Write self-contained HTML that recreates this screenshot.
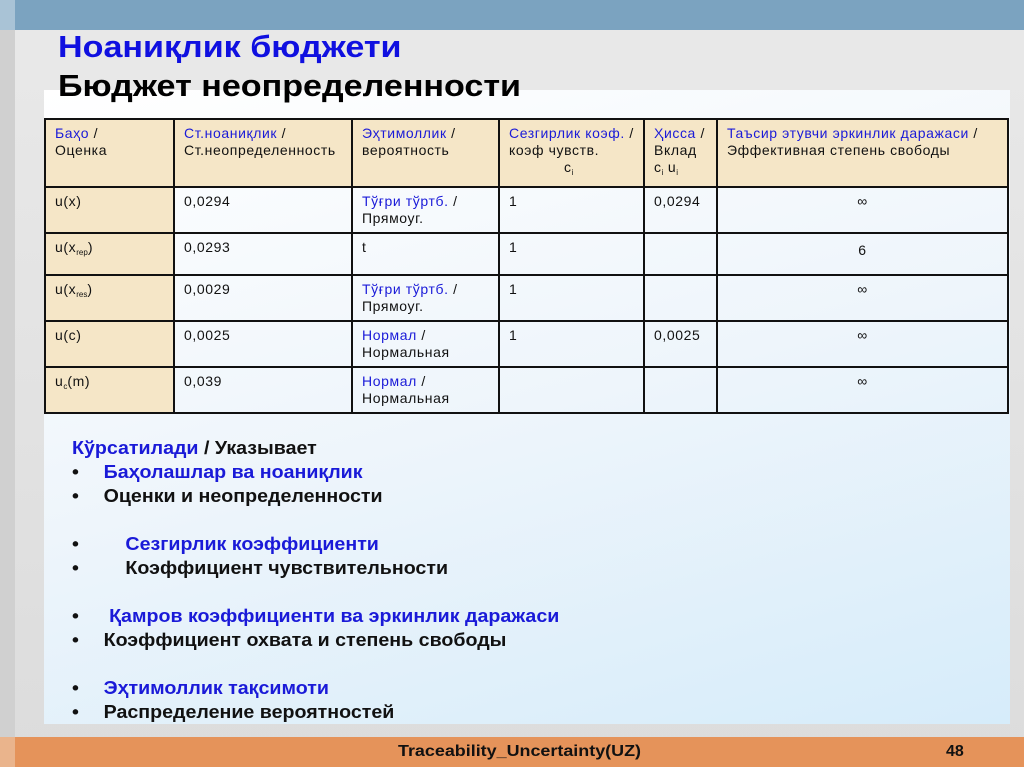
<!DOCTYPE html>
<html><head><meta charset="utf-8"><style>
*{margin:0;padding:0;box-sizing:border-box}
body{width:1024px;height:767px;position:relative;overflow:hidden;font-family:"Liberation Sans",Arial,sans-serif;background:linear-gradient(180deg,#e9e9e9 0%,#dcdcdc 100%)}
.topbar{position:absolute;left:15px;top:0;width:1009px;height:30px;background:#7ba3c0}
.topleft{position:absolute;left:0;top:0;width:15px;height:30px;background:#a9c3d6}
.leftstrip{position:absolute;left:0;top:30px;width:15px;height:707px;background:#d0d0d0}
.h1{position:absolute;left:58px;top:29px;font-size:31px;font-weight:bold;color:#1010e0;transform:scaleX(1.1);transform-origin:left top;white-space:nowrap}
.h2{position:absolute;left:58px;top:68px;font-size:31px;font-weight:bold;color:#000;transform:scaleX(1.1);transform-origin:left top;white-space:nowrap}
.panel{position:absolute;left:44px;top:90px;width:966px;height:634px;background:linear-gradient(165deg,#ffffff 0%,#eef5fb 50%,#d6ecfa 100%)}
table{position:absolute;left:44px;top:118px;border-collapse:collapse;font-size:14px;letter-spacing:.6px;color:#111;table-layout:fixed;width:963px}
td{border:2px solid #111;vertical-align:top;padding:5px 9px;line-height:17px;white-space:nowrap}
tr.hd td{background:#f5e6c7;height:65px}
td.c1{background:#f5e6c7}
.b{color:#1a1ad8}
sub{font-size:8px;vertical-align:-3px;letter-spacing:0}
.list{position:absolute;left:72px;top:436px;font-size:18px;font-weight:bold;line-height:24px;color:#111;transform:scaleX(1.09);transform-origin:left top}
.list div{white-space:nowrap;height:24px}
.list .dot{display:inline-block;width:29px}
.footer{position:absolute;left:15px;top:737px;width:1009px;height:30px;background:#e5935a}
.fl{position:absolute;left:0;top:737px;width:15px;height:30px;background:#eab48c}
.ft{position:absolute;left:398px;top:743px;font-size:16px;font-weight:bold;color:#111;transform:scaleX(1.12);transform-origin:left top;white-space:nowrap}
.pn{position:absolute;left:946px;top:743px;font-size:16px;font-weight:bold;color:#111}
</style></head><body>
<div class="topleft"></div><div class="topbar"></div><div class="leftstrip"></div>
<div class="panel"></div>
<div class="h1">Ноаниқлик бюджети</div>
<div class="h2">Бюджет неопределенности</div>
<table>
<colgroup><col style="width:129px"><col style="width:178px"><col style="width:147px"><col style="width:145px"><col style="width:73px"><col style="width:291px"></colgroup>
<tr class="hd">
<td><span class="b">Баҳо</span> /<br>Оценка</td>
<td><span class="b">Ст.ноаниқлик</span> /<br>Ст.неопределенность</td>
<td><span class="b">Эҳтимоллик</span> /<br>вероятность</td>
<td><span class="b">Сезгирлик коэф.</span> /<br>коэф чувств.<br><span style="padding-left:55px">c<sub>i</sub></span></td>
<td><span class="b">Ҳисса</span> /<br>Вклад<br>c<sub>i</sub> u<sub>i</sub></td>
<td><span class="b">Таъсир этувчи эркинлик даражаси</span> /<br>Эффективная степень свободы</td>
</tr>
<tr style="height:46px"><td class="c1">u(x)</td><td>0,0294</td><td><span class="b">Тўғри тўртб.</span> /<br>Прямоуг.</td><td>1</td><td>0,0294</td><td style="text-align:center">∞</td></tr>
<tr style="height:42px"><td class="c1">u(x<sub>rep</sub>)</td><td>0,0293</td><td>t</td><td>1</td><td></td><td style="text-align:center;padding-top:8px">6</td></tr>
<tr style="height:46px"><td class="c1">u(x<sub>res</sub>)</td><td>0,0029</td><td><span class="b">Тўғри тўртб.</span> /<br>Прямоуг.</td><td>1</td><td></td><td style="text-align:center">∞</td></tr>
<tr style="height:46px"><td class="c1">u(c)</td><td>0,0025</td><td><span class="b">Нормал</span> /<br>Нормальная</td><td>1</td><td>0,0025</td><td style="text-align:center">∞</td></tr>
<tr style="height:46px"><td class="c1">u<sub>c</sub>(m)</td><td>0,039</td><td><span class="b">Нормал</span> /<br>Нормальная</td><td></td><td></td><td style="text-align:center">∞</td></tr>
</table>
<div class="list">
<div><span class="b">Кўрсатилади</span> / Указывает</div>
<div><span class="dot">•</span><span class="b">Баҳолашлар ва ноаниқлик</span></div>
<div><span class="dot">•</span>Оценки и неопределенности</div>
<div></div>
<div><span class="dot">•</span>&nbsp;&nbsp;&nbsp;&nbsp;<span class="b">Сезгирлик коэффициенти</span></div>
<div><span class="dot">•</span>&nbsp;&nbsp;&nbsp;&nbsp;Коэффициент чувствительности</div>
<div></div>
<div><span class="dot">•</span>&nbsp;<span class="b">Қамров коэффициенти ва эркинлик даражаси</span></div>
<div><span class="dot">•</span>Коэффициент охвата и степень свободы</div>
<div></div>
<div><span class="dot">•</span><span class="b">Эҳтимоллик тақсимоти</span></div>
<div><span class="dot">•</span>Распределение вероятностей</div>
</div>
<div class="fl"></div><div class="footer"></div>
<div class="ft">Traceability_Uncertainty(UZ)</div>
<div class="pn">48</div>
</body></html>
